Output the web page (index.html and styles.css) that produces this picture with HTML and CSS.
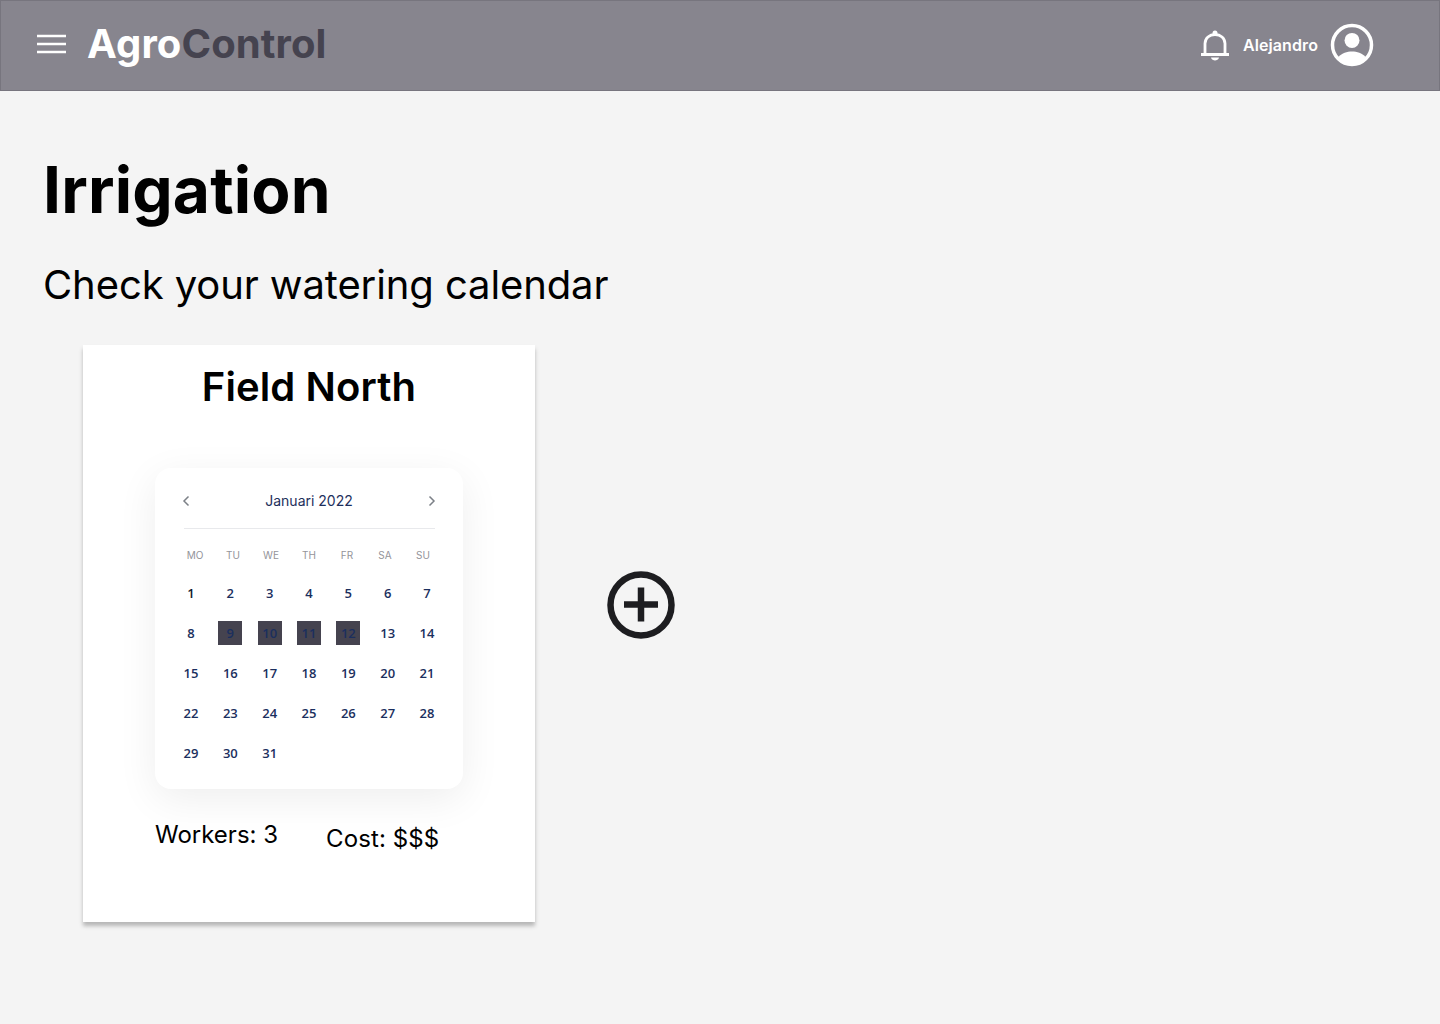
FILE: index.html
```html
<!DOCTYPE html>
<html lang="en">
<head>
    <meta charset="UTF-8">
    <meta name="viewport" content="width=device-width, initial-scale=1.0">
    <title>AgroControl - Irrigation</title>
    <link rel="stylesheet" href="styles.css">
</head>
<body>
    <header class="topbar">
        <svg class="menu-icon" width="30" height="20" viewBox="0 0 30 20">
            <path d="M1 2H30M1 10H30M1 18H30" stroke="#fff" stroke-width="2.6" fill="none"/>
        </svg>
        <div class="logo">Agro<span class="logo-dark">Control</span></div>
        <div class="user">
            <svg class="bell-icon" width="30" height="32" viewBox="0 0 30 32">
                <path d="M1 25.5H29M5 25V14.5C5 9 9.5 5.5 15 5.5C20.5 5.5 25 9 25 14.5V25" stroke="#fff" stroke-width="2.8" fill="none"/>
                <circle cx="15" cy="4" r="2.5" fill="#fff"/>
                <path d="M11 28.5H19C18.5 30.8 16.5 31.5 15 31.5C13.5 31.5 11.5 30.8 11 28.5Z" fill="#fff"/>
            </svg>
            <span class="user-name">Alejandro</span>
            <svg class="avatar-icon" width="44" height="44" viewBox="0 0 44 44">
                <circle cx="22" cy="22" r="19.5" fill="none" stroke="#fff" stroke-width="3.5"/>
                <circle cx="22" cy="17.4" r="7.5" fill="#fff"/>
                <path d="M8.5 34C12 30 17 28.5 22 28.5C27 28.5 32 30 35.5 34C32 39 27 41 22 41C17 41 12 39 8.5 34Z" fill="#fff"/>
            </svg>
        </div>
    </header>

    <main class="content">
        <h1 class="page-title">Irrigation</h1>
        <p class="page-subtitle">Check your watering calendar</p>

        <div class="fields">
            <section class="field-card">
                <h2 class="field-name">Field North</h2>

                <div class="calendar">
                    <div class="calendar-head">
                        <svg class="arrow-prev" width="8" height="12" viewBox="0 0 8 12"><path d="M6.5 1.5L2 6L6.5 10.5" stroke="#7c8087" stroke-width="1.5" fill="none"/></svg>
                        <span class="calendar-month">Januari 2022</span>
                        <svg class="arrow-next" width="8" height="12" viewBox="0 0 8 12"><path d="M1.5 1.5L6 6L1.5 10.5" stroke="#7c8087" stroke-width="1.5" fill="none"/></svg>
                    </div>
                    <div class="weekdays">
                        <span>MO</span><span>TU</span><span>WE</span><span>TH</span><span>FR</span><span>SA</span><span>SU</span>
                    </div>
                    <div class="days">
                        <span class="first">1</span><span>2</span><span>3</span><span>4</span><span>5</span><span>6</span><span>7</span>
                        <span>8</span><span class="marked">9</span><span class="marked">10</span><span class="marked">11</span><span class="marked">12</span><span>13</span><span>14</span>
                        <span>15</span><span>16</span><span>17</span><span>18</span><span>19</span><span>20</span><span>21</span>
                        <span>22</span><span>23</span><span>24</span><span>25</span><span>26</span><span>27</span><span>28</span>
                        <span>29</span><span>30</span><span>31</span>
                    </div>
                </div>

                <div class="field-info">
                    <span>Workers: 3</span>
                    <span class="field-cost">Cost: $$$</span>
                </div>
            </section>

            <svg class="add-icon" width="68" height="68" viewBox="0 0 68 68">
                <circle cx="34" cy="34" r="30.5" fill="none" stroke="#1d1d20" stroke-width="6.5"/>
                <path d="M34 16.5V50.5M17 33.5H51" stroke="#1d1d20" stroke-width="6.5" fill="none"/>
            </svg>
        </div>
    </main>
</body>
</html>
```

FILE: styles.css
```css
body {
    margin: 0;
    background-color: #f4f4f4;
    color: #000;
    font-family: 'Inter', 'Liberation Sans', sans-serif;
}

.topbar {
    display: flex;
    align-items: center;
    box-sizing: border-box;
    height: 91px;
    padding: 0 65px 0 35px;
    background-color: #87858e;
    border: 1px solid #77757e;
}

.menu-icon {
    margin-top: -4px;
}

.logo {
    margin: -5px 0 0 21px;
    color: #fff;
    font-size: 40px;
    font-weight: 700;
    letter-spacing: 0.1px;
}

.logo-dark {
    color: #45434f;
}

.user {
    display: flex;
    align-items: center;
    margin: -1px 0 0 auto;
}

.user-name {
    margin: 0 12px 0 13px;
    color: #fff;
    font-size: 16px;
    font-weight: 600;
    letter-spacing: 0.1px;
}

.content {
    padding: 0 43px 60px;
}

.page-title {
    margin: 60px 0 0;
    font-size: 64px;
    line-height: 77px;
    font-weight: 700;
    letter-spacing: 0.2px;
}

.page-subtitle {
    margin: 33px 0 0;
    font-size: 40px;
    line-height: 48px;
    letter-spacing: -0.1px;
}

.fields {
    display: flex;
    align-items: flex-start;
    margin: 36px 0 0 40px;
}

.field-card {
    box-sizing: border-box;
    width: 452px;
    height: 577px;
    padding-top: 18px;
    background-color: #fff;
    box-shadow: 0 4px 4px rgba(0, 0, 0, 0.25);
}

.field-name {
    margin: 0;
    font-size: 40px;
    line-height: 48px;
    font-weight: 600;
    letter-spacing: 0.1px;
    text-align: center;
}

.calendar {
    box-sizing: border-box;
    width: 308px;
    height: 321px;
    margin: 57px auto 0;
    padding: 24px 28px 0;
    background-color: #fff;
    border-radius: 16px;
    box-shadow: 0 10px 40px rgba(0, 0, 0, 0.07);
}

.calendar-head {
    display: flex;
    align-items: flex-start;
    justify-content: space-between;
    height: 36px;
    margin: 0 0 18px 1px;
    border-bottom: 1px solid #e8e9ec;
}

.arrow-prev {
    margin: 3px 0 0 -2px;
}

.arrow-next {
    margin: 3px -1px 0 0;
}

.calendar-month {
    color: #1d2f5c;
    font-size: 14px;
    line-height: 17px;
}

.weekdays {
    display: grid;
    grid-template-columns: repeat(7, 38px);
    justify-content: center;
    color: #94949a;
    font-size: 10px;
    line-height: 16px;
    text-align: center;
}

.days {
    display: grid;
    grid-template-columns: repeat(7, 24px);
    grid-auto-rows: 24px;
    gap: 16px 15.33px;
    margin: 18px 0 0 -4px;
    color: #1b2f5e;
    font-family: 'Open Sans', 'Noto Sans', sans-serif;
    font-size: 13px;
    font-weight: 600;
    line-height: 24px;
    text-align: center;
}

.days .first {
    color: #14192b;
}

.days .marked {
    background-color: #45434f;
}

.field-info {
    display: flex;
    margin: 31px 0 0 72px;
    font-size: 24px;
    line-height: 29px;
}

.field-cost {
    margin: 4px 0 0 48px;
    letter-spacing: 0.1px;
}

.add-icon {
    margin: 226px 0 0 72px;
}
```
